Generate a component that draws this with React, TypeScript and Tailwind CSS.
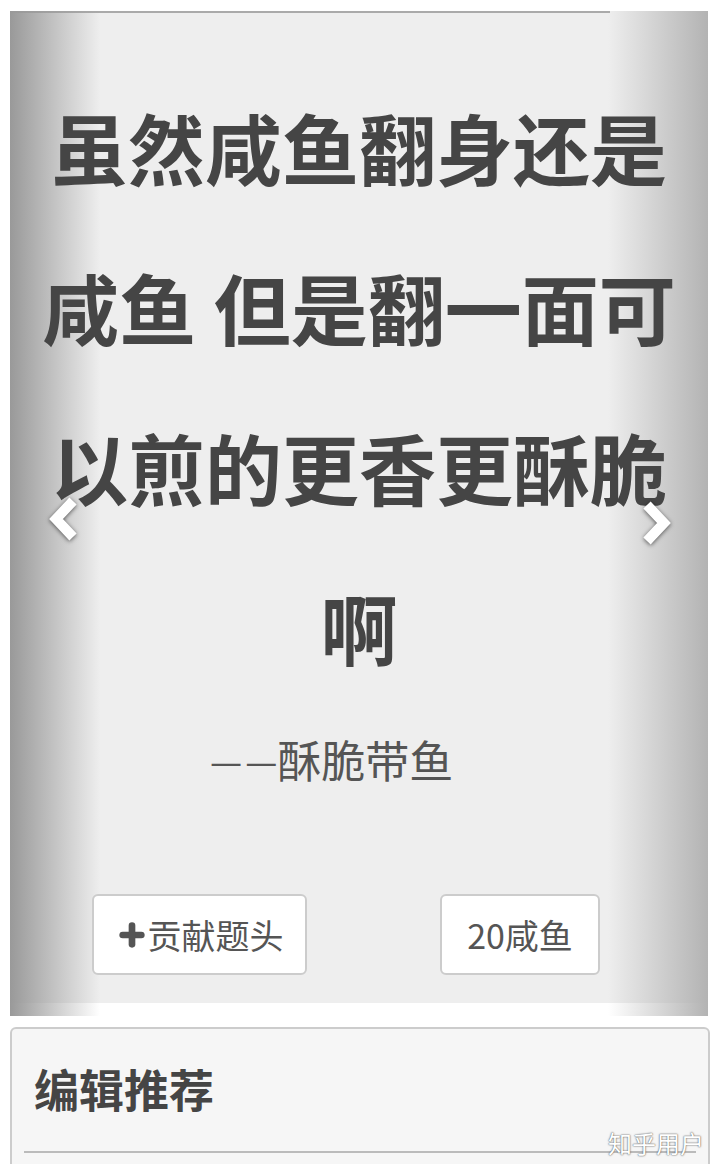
import { Plus } from "lucide-react";

const cjk = "font-['Noto_Sans_CJK_SC','Noto_Sans',sans-serif]";

function Chevron({ dir }: { dir: "left" | "right" }) {
  return (
    <svg
      width="36"
      height="48"
      viewBox="0 0 36 48"
      className="drop-shadow-[0_1px_2px_rgba(0,0,0,0.6)]"
    >
      <path
        d={dir === "left" ? "M27 6 L10 24 L27 42" : "M9 6 L26 24 L9 42"}
        fill="none"
        stroke="#ffffff"
        strokeWidth="10"
        strokeLinejoin="miter"
      />
    </svg>
  );
}

export default function App() {
  return (
    <div className={`w-[720px] h-[1164px] overflow-hidden bg-white ${cjk}`}>
      {/* carousel */}
      <div className="relative mx-[10px] mt-[11px] w-[698px] h-[992px] bg-[#eeeeee]">
        <div className="absolute left-0 top-0 w-[600px] h-[2px] bg-[#aaaaaa]" />
        <div className="absolute left-0 top-0 -bottom-[13px] w-[90px] bg-gradient-to-r from-[#999999] to-[#eeeeee]/0" />
        <div className="absolute right-0 top-0 -bottom-[13px] w-[100px] bg-gradient-to-l from-[#b3b3b3] to-[#eeeeee]/0" />

        <div className="relative flex flex-col items-center pt-[56px]">
          <p className="w-[650px] text-center text-[77px] leading-[160px] font-bold text-[#454545]">
            虽然咸鱼翻身还是咸鱼 但是翻一面可以煎的更香更酥脆啊
          </p>
          <p className="self-start ml-[200px] mt-[22px] text-[44px] leading-[60px] text-[#555555] flex items-center">
            <span className="text-[36px] mr-[3px]">—</span>
            <span className="text-[36px]">—</span>
            <span>酥脆带鱼</span>
          </p>
          <div className="self-stretch flex mt-[105px]">
            <button className="ml-[82px] w-[215px] h-[81px] bg-white border-2 border-[#cccccc] rounded-[6px] flex items-center justify-center text-[34px] text-[#555555]">
              <Plus size={32} strokeWidth={5} className="text-[#555555]" />
              贡献题头
            </button>
            <button className="ml-[133px] w-[160px] h-[81px] bg-white border-2 border-[#cccccc] rounded-[6px] flex items-center justify-center text-[34px] text-[#555555]">
              20咸鱼
            </button>
          </div>
        </div>

        <div className="absolute left-[36px] top-[484px]">
          <Chevron dir="left" />
        </div>
        <div className="absolute left-[628px] top-[488px]">
          <Chevron dir="right" />
        </div>
      </div>

      {/* editor picks */}
      <div className="relative mx-[10px] mt-[24px] w-[700px] h-[200px] bg-[#f6f6f6] border-2 border-[#cccccc] rounded-[6px] px-[12px]">
        <h2 className="pl-[10px] pt-[28px] text-[45px] leading-[64px] font-bold text-[#454545]">
          编辑推荐
        </h2>
        <div className="mt-[30px] h-[2px] bg-[#bbbbbb]" />
        <span className="absolute right-[4px] top-[96px] text-[24px] text-white [text-shadow:0_0_2px_#666,0_0_1px_#666]">
          知乎用户
        </span>
      </div>
    </div>
  );
}
